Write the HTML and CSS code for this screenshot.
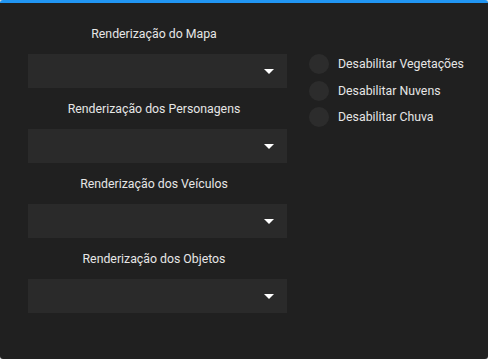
FILE: index.html
```html
<!DOCTYPE html>
<html lang="pt-BR">
<head>
    <meta charset="UTF-8">
    <title>Gráficos</title>
    <link rel="stylesheet" href="styles.css">
</head>
<body>

    <div class="panel">
        <div class="content">
            <div class="selects">
                <div class="group">
                    <div class="label">Renderização do Mapa</div>
                    <div class="select"><span class="arrow"></span></div>
                </div>
                <div class="group">
                    <div class="label">Renderização dos Personagens</div>
                    <div class="select"><span class="arrow"></span></div>
                </div>
                <div class="group">
                    <div class="label">Renderização dos Veículos</div>
                    <div class="select"><span class="arrow"></span></div>
                </div>
                <div class="group">
                    <div class="label">Renderização dos Objetos</div>
                    <div class="select"><span class="arrow"></span></div>
                </div>
            </div>
            <div class="toggles">
                <div class="toggle"><span class="dot"></span>Desabilitar Vegetações</div>
                <div class="toggle"><span class="dot"></span>Desabilitar Nuvens</div>
                <div class="toggle"><span class="dot"></span>Desabilitar Chuva</div>
            </div>
        </div>
    </div>

</body>
</html>
```

FILE: styles.css
```css
html,
body {
    margin: 0;
    height: 100%;
    background-color: #dcdcdc;
}

.panel {
    height: 100%;
    box-sizing: border-box;
    border-top: 3px solid #2196f3;
    border-radius: 3px;
    background-color: #202020;
    color: #e6e6e6;
    font-family: Roboto, "Noto Sans", sans-serif;
    font-size: 12.3px;
}

.content {
    display: flex;
    gap: 22px;
    padding: 10px 0 0 28px;
}

.selects {
    width: 259px;
}

.label {
    line-height: 16px;
    margin: 13px 0 12px;
    padding-right: 7px;
    text-align: center;
}

.select {
    height: 34px;
    background-color: #2a2a2a;
    display: flex;
    align-items: center;
    justify-content: flex-end;
    padding-right: 13px;
}

.arrow {
    width: 0;
    height: 0;
    border-left: 5px solid transparent;
    border-right: 5px solid transparent;
    border-top: 5px solid #fff;
}

.toggles {
    display: flex;
    flex-direction: column;
    gap: 6.5px;
    padding-top: 41px;
}

.toggle {
    display: flex;
    align-items: center;
    gap: 9px;
    height: 20px;
}

.dot {
    width: 20px;
    height: 20px;
    border-radius: 50%;
    background-color: #2c2c2c;
}
```
